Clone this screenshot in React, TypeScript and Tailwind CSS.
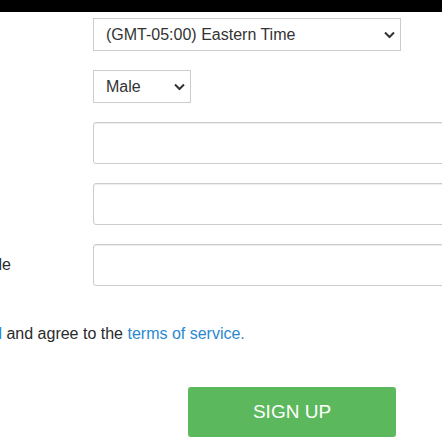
import { useState } from "react";

function Chevron() {
  return (
    <svg
      className="pointer-events-none absolute right-[6px] top-1/2 -translate-y-1/2"
      width="11"
      height="7"
      viewBox="0 0 11 7"
      fill="none"
    >
      <path d="M1 1l4.5 4.5L10 1" stroke="#333" strokeWidth="2" />
    </svg>
  );
}

function Select({
  value,
  options,
  width,
}: {
  value: string;
  options: string[];
  width: string;
}) {
  const [v, setV] = useState(value);
  return (
    <div className={`relative ${width}`}>
      <select
        value={v}
        onChange={(e) => setV(e.target.value)}
        className="h-[33px] w-full appearance-none border border-[#cccccc] bg-white px-3 text-[16px] text-[#333] outline-none"
      >
        {options.map((o) => (
          <option key={o}>{o}</option>
        ))}
      </select>
      <Chevron />
    </div>
  );
}

function Field({ label }: { label?: string }) {
  return (
    <div className="flex items-center">
      <div className="w-[93px] shrink-0">
        {label && (
          <span className="inline-flex w-[11px] justify-end whitespace-nowrap">
            {label}
          </span>
        )}
      </div>
      <input
        type="text"
        className="h-[42px] w-[420px] shrink-0 rounded-[3px] border border-[#cccccc] bg-white px-3 text-[16px] shadow-[inset_0_1px_1px_rgba(0,0,0,0.075)] outline-none"
      />
    </div>
  );
}

export default function App() {
  return (
    <div className="h-[442px] w-full overflow-hidden bg-white font-['Liberation_Sans',Arial,sans-serif] text-[16px] text-[#2b2b2b]">
      <div className="h-3 bg-black" />

      <form className="flex flex-col pt-[6px]">
        <div className="flex flex-col gap-[19px]">
          <div className="pl-[93px]">
            <Select
              value="(GMT-05:00) Eastern Time"
              width="w-[308px]"
              options={[
                "(GMT-08:00) Pacific Time",
                "(GMT-07:00) Mountain Time",
                "(GMT-06:00) Central Time",
                "(GMT-05:00) Eastern Time",
              ]}
            />
          </div>

          <div className="pl-[93px]">
            <Select value="Male" width="w-[98px]" options={["Male", "Female"]} />
          </div>

          <Field />
          <Field />
          <Field label="Mobile" />
        </div>

        <p className="mt-[37px] whitespace-nowrap leading-[22px]">
          <span className="inline-flex w-[2px] justify-end">
            <a href="#" className="text-[#2a88d0]">
              Privacy Protocol
            </a>
          </span>{" "}
          and agree to the{" "}
          <a href="#" className="text-[#2a88d0]">
            terms of service.
          </a>
        </p>

        <div className="mt-[42px] pl-[188px]">
          <button
            type="button"
            className="h-[50px] w-[208px] rounded-[3px] bg-[#5cb85c] text-[19px] text-white"
          >
            SIGN UP
          </button>
        </div>
      </form>
    </div>
  );
}
